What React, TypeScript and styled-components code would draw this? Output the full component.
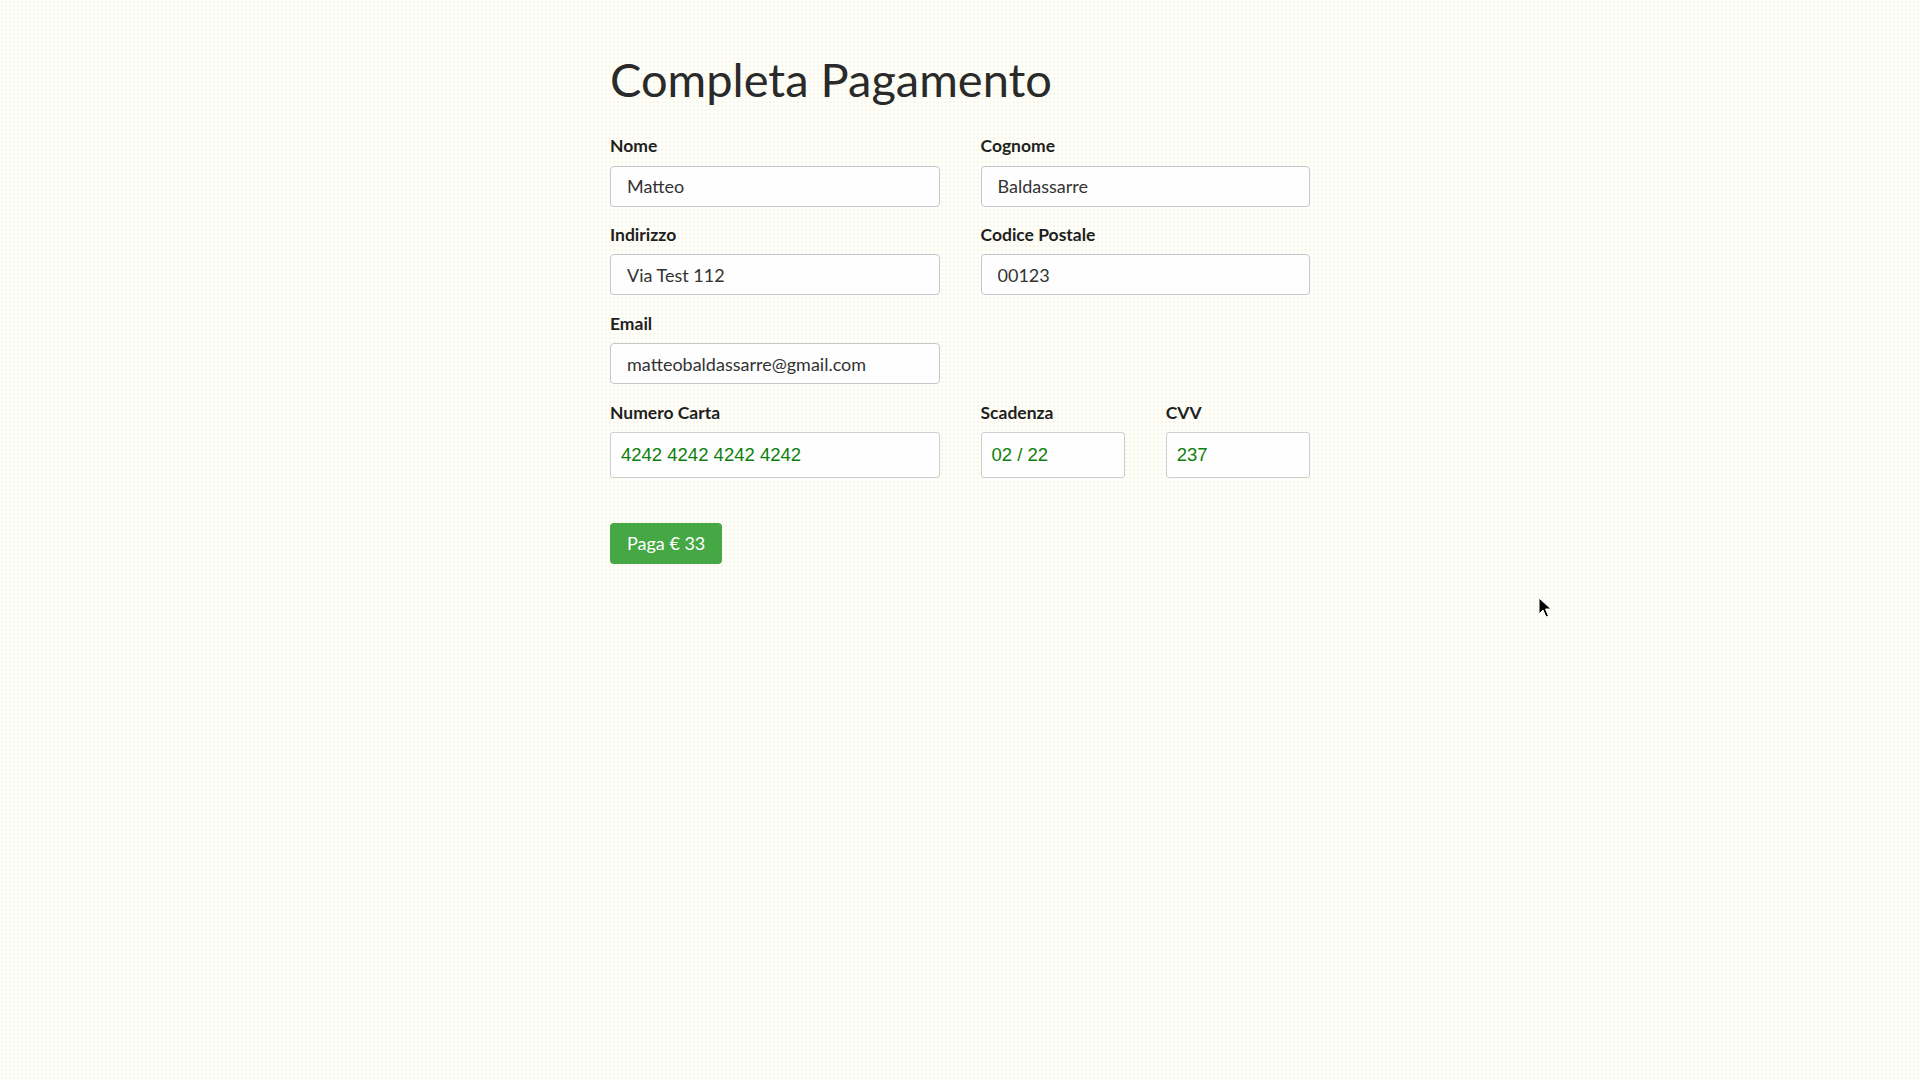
import React from 'react';
import styled, { createGlobalStyle } from 'styled-components';

const GlobalStyle = createGlobalStyle`
  html, body {
    margin: 0;
    padding: 0;
    min-height: 100%;
  }
  body {
    min-height: 1080px;
    background-color: #fefefe;
    background-image: radial-gradient(circle, #f7f5cc 0.6px, transparent 1px);
    background-size: 4px 4px;
    font-family: Lato, "Open Sans", sans-serif;
    color: #222;
  }
`;

const Page = styled.div`
  position: relative;
  min-height: 1080px;
`;

const Container = styled.div`
  max-width: 700px;
  margin: 0 auto;
  padding-top: 51px;
`;

const Title = styled.h1`
  font-family: Lato, "Open Sans", sans-serif;
  font-size: 47px;
  font-weight: 400;
  line-height: 1.2;
  color: #2a2a2a;
  margin: 0 0 29px 0;
`;

const Form = styled.form``;

const Grid = styled.div`
  display: grid;
  grid-template-columns: repeat(4, 1fr);
  column-gap: 41px;
  row-gap: 18.5px;
`;

const Field = styled.div<{ span: number }>`
  grid-column: span ${p => p.span};
  display: flex;
  flex-direction: column;
`;

const Label = styled.label`
  display: block;
  font-family: Lato, "Open Sans", sans-serif;
  font-size: 17.5px;
  font-weight: 700;
  line-height: 1.1;
  color: #1f1f1f;
  margin-bottom: 10px;
`;

const Input = styled.input`
  box-sizing: border-box;
  width: 100%;
  height: 41px;
  padding: 0 16px;
  border: 1px solid #c6c5d0;
  border-radius: 4px;
  background: #fefefe;
  font-family: Lato, "Open Sans", sans-serif;
  font-size: 18px;
  color: #333;
  outline: none;
`;

const CardBox = styled.div`
  box-sizing: border-box;
  height: 46px;
  padding: 0 10px;
  display: flex;
  align-items: center;
  border: 1px solid #cdcdd3;
  border-radius: 3px;
  background: #fefefe;
  font-family: "Liberation Sans", Arial, sans-serif;
  font-size: 18.5px;
  color: #0c800c;
`;

const PayButton = styled.button`
  margin-top: 45px;
  height: 41px;
  padding: 0 17px;
  border: none;
  border-radius: 4px;
  background: #45a845;
  color: #ffffff;
  font-family: Lato, "Open Sans", sans-serif;
  font-size: 18px;
  cursor: pointer;
`;

const Cursor = styled.svg`
  position: absolute;
  left: 1538px;
  top: 597px;
`;

const App: React.FC = () => {
  return (
    <>
      <GlobalStyle />
      <Page>
        <Container>
          <Title>Completa Pagamento</Title>
          <Form onSubmit={e => e.preventDefault()}>
            <Grid>
              <Field span={2}>
                <Label htmlFor="nome">Nome</Label>
                <Input id="nome" defaultValue="Matteo" />
              </Field>
              <Field span={2}>
                <Label htmlFor="cognome">Cognome</Label>
                <Input id="cognome" defaultValue="Baldassarre" />
              </Field>
              <Field span={2}>
                <Label htmlFor="indirizzo">Indirizzo</Label>
                <Input id="indirizzo" defaultValue="Via Test 112" />
              </Field>
              <Field span={2}>
                <Label htmlFor="cap">Codice Postale</Label>
                <Input id="cap" defaultValue="00123" />
              </Field>
              <Field span={2}>
                <Label htmlFor="email">Email</Label>
                <Input id="email" defaultValue="matteobaldassarre@gmail.com" />
              </Field>
              <Field span={2} />
              <Field span={2}>
                <Label>Numero Carta</Label>
                <CardBox>4242 4242 4242 4242</CardBox>
              </Field>
              <Field span={1}>
                <Label>Scadenza</Label>
                <CardBox>02 / 22</CardBox>
              </Field>
              <Field span={1}>
                <Label>CVV</Label>
                <CardBox>237</CardBox>
              </Field>
            </Grid>
            <PayButton type="submit">Paga € 33</PayButton>
          </Form>
        </Container>
        <Cursor width="14" height="22" viewBox="0 0 14 22">
          <path d="M1 1 L1 17 L5 13 L8 20 L10.5 19 L7.5 12 L13 12 Z" fill="#000" stroke="#fff" strokeWidth="1" />
        </Cursor>
      </Page>
    </>
  );
};

export default App;
